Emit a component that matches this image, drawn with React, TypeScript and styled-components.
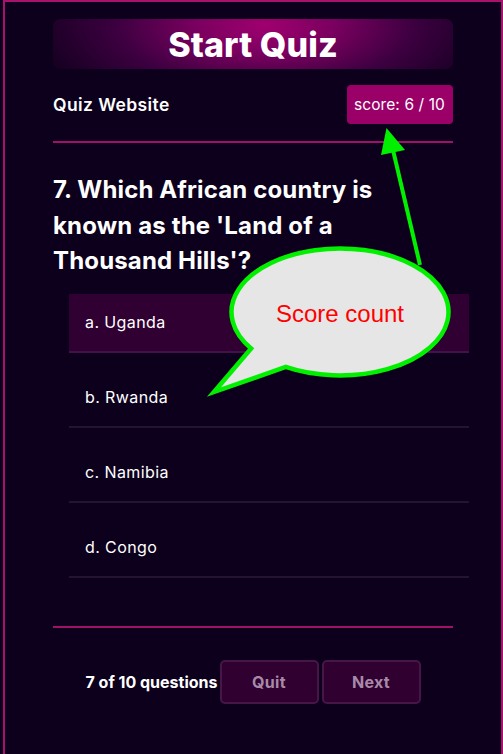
import React from "react";
import styled, { createGlobalStyle } from "styled-components";

const GlobalStyle = createGlobalStyle`
  html, body {
    margin: 0;
    padding: 0;
    overflow: hidden;
    background: #0d001c;
  }
  body {
    font-family: "Inter", "Noto Sans", sans-serif;
    color: #ffffff;
  }
  * { box-sizing: border-box; }
`;

const Page = styled.div`
  position: relative;
  width: 503px;
  height: 754px;
  overflow: hidden;
`;

const Frame = styled.div`
  margin-left: 3px;
  width: 500px;
  min-height: 800px;
  border: 2px solid #a8126c;
  border-bottom: none;
  padding: 17px 48px 0 48px;
  background: #0d001c;
`;

const TitleBar = styled.h1`
  margin: 0 0 16px 0;
  height: 50px;
  border-radius: 7px;
  display: flex;
  align-items: center;
  justify-content: center;
  font-size: 34px;
  font-weight: 800;
  letter-spacing: 0.1px;
  color: #ffffff;
  background: radial-gradient(
    ellipse 230px 95px at 53% 12%,
    #a0006f 0%,
    #7a005f 30%,
    #3c0040 65%,
    #170022 100%
  );
`;

const HeaderRow = styled.div`
  display: flex;
  align-items: center;
  justify-content: space-between;
  height: 39px;
`;

const SiteName = styled.span`
  font-size: 17.5px;
  font-weight: 600;
  letter-spacing: 0.4px;
`;

const ScoreBadge = styled.span`
  height: 39px;
  padding: 0 8px 0 7px;
  display: flex;
  align-items: center;
  border-radius: 4px;
  background: #9b0069;
  font-size: 15.5px;
  font-weight: 400;
  letter-spacing: 0.1px;
`;

const Divider = styled.hr<{ $top: number }>`
  margin: ${(p) => p.$top}px 0 0 0;
  border: none;
  height: 2px;
  background: #a0126a;
`;

const Question = styled.h2`
  margin: 29px 0 0 0;
  max-width: 340px;
  font-size: 24px;
  font-weight: 700;
  line-height: 35.5px;
  letter-spacing: 0.15px;
`;

const Options = styled.ul`
  list-style: none;
  margin: 15px 0 0 16px;
  padding: 0;
  width: 100%;
`;

const Option = styled.li<{ $selected?: boolean }>`
  height: 59px;
  margin-bottom: 16px;
  padding: 0 16px;
  display: flex;
  align-items: center;
  font-size: 16px;
  font-weight: 400;
  letter-spacing: 0.4px;
  background: ${(p) => (p.$selected ? "#300032" : "transparent")};
  border-bottom: 2px solid ${(p) => (p.$selected ? "#43124a" : "#25142f")};
`;

const Footer = styled.div`
  margin-top: 32px;
  display: flex;
  align-items: center;
  justify-content: center;
  gap: 3px;
`;

const Count = styled.span`
  font-size: 16px;
  font-weight: 700;
  margin-right: -1px;
`;

const NavButton = styled.button`
  width: 99px;
  height: 44px;
  border-radius: 5px;
  border: 2px solid #461647;
  background: #2f0030;
  color: #a88aa8;
  font-family: "Inter", "Noto Sans", sans-serif;
  font-size: 16px;
  font-weight: 700;
  letter-spacing: 0.3px;
  cursor: pointer;
`;

const Overlay = styled.svg`
  position: absolute;
  left: 0;
  top: 0;
  pointer-events: none;
`;

const cx = 340;
const cy = 312;
const rx = 108.5;
const ry = 63.5;
const pt = (deg: number) => {
  const t = (deg * Math.PI) / 180;
  return [cx + rx * Math.cos(t), cy + ry * Math.sin(t)];
};
const [ax, ay] = pt(145);
const [bx, by] = pt(120);
const bubblePath = `M ${ax} ${ay} L 214 392 L ${bx} ${by} A ${rx} ${ry} 0 1 0 ${ax} ${ay} Z`;

const options = ["a. Uganda", "b. Rwanda", "c. Namibia", "d. Congo"];

export default function App() {
  return (
    <Page>
      <GlobalStyle />
      <Frame>
        <TitleBar>Start Quiz</TitleBar>
        <HeaderRow>
          <SiteName>Quiz Website</SiteName>
          <ScoreBadge>score: 6 / 10</ScoreBadge>
        </HeaderRow>
        <Divider $top={17} />
        <Question>
          7. Which African country is known as the 'Land of a Thousand Hills'?
        </Question>
        <Options>
          {options.map((o, i) => (
            <Option key={o} $selected={i === 0}>
              {o}
            </Option>
          ))}
        </Options>
        <Divider $top={48} />
        <Footer>
          <Count>7 of 10 questions</Count>
          <NavButton>Quit</NavButton>
          <NavButton>Next</NavButton>
        </Footer>
      </Frame>
      <Overlay width={503} height={754} viewBox="0 0 503 754">
        <line x1={420} y1={265} x2={393} y2={150} stroke="#00f000" strokeWidth={4} />
        <polygon points="386.5,128 381,155 405,150" fill="#00f000" />
        <path
          d={bubblePath}
          fill="#e6e6e6"
          stroke="#00f000"
          strokeWidth={4.5}
          strokeLinejoin="miter"
        />
        <text
          x={340}
          y={322}
          textAnchor="middle"
          fontFamily="'Liberation Sans', Arial, sans-serif"
          fontSize={24}
          fill="#ff0000"
        >
          Score count
        </text>
      </Overlay>
    </Page>
  );
}
